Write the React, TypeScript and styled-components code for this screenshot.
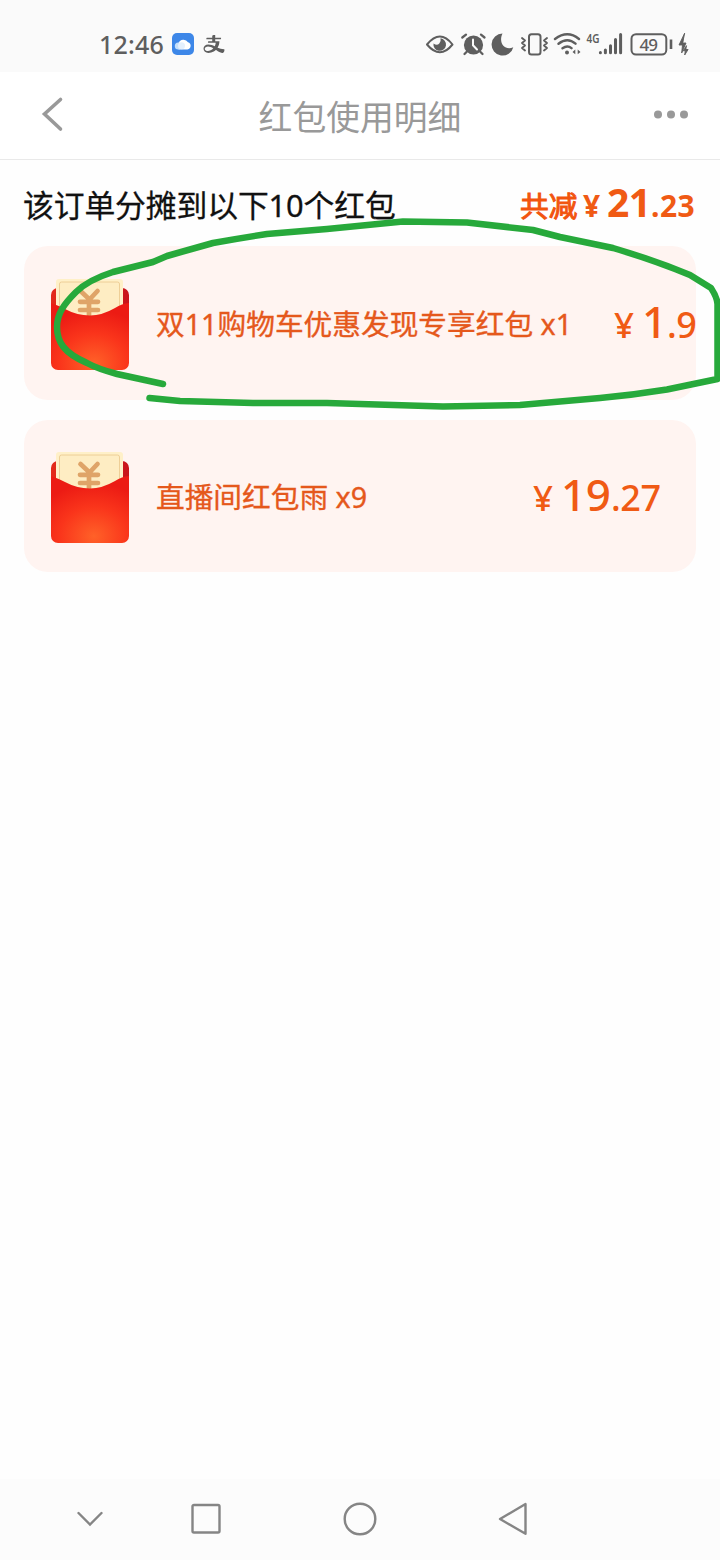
import React from "react";
import styled, { createGlobalStyle } from "styled-components";
import { AiOutlineAlipay } from "react-icons/ai";

const GlobalStyle = createGlobalStyle`
  * { box-sizing: border-box; }
  body {
    margin: 0;
    background: #fff;
    font-family: "Open Sans", "Noto Sans CJK SC", sans-serif;
  }
  svg { display: block; flex: none; }
`;

const Screen = styled.div`
  position: relative;
  display: flex;
  flex-direction: column;
  width: 720px;
  height: 1560px;
  background: #fefefe;
  overflow: hidden;
`;

const StatusBar = styled.header`
  display: flex;
  align-items: center;
  justify-content: space-between;
  height: 72px;
  padding: 16px 31px 0 99px;
  background: #fafafa;
  color: #5e5e5e;
`;

const StatusGroup = styled.div<{ $gap: number }>`
  display: flex;
  align-items: center;
  gap: ${(p) => p.$gap}px;
`;

const Clock = styled.span`
  width: 65px;
  font: 500 25px/30px "Noto Sans", sans-serif;
  letter-spacing: 0.2px;
  white-space: nowrap;
`;

const TitleBar = styled.div`
  display: grid;
  grid-template-columns: 72px 1fr 72px;
  align-items: center;
  height: 88px;
  padding: 0 16px;
  border-bottom: 1px solid #e9e9e9;
  background: #fff;
`;

const BarButton = styled.button<{ $end?: boolean }>`
  display: flex;
  justify-content: ${(p) => (p.$end ? "flex-end" : "flex-start")};
  padding: 0 ${(p) => (p.$end ? 15 : 0)}px ${(p) => (p.$end ? 2 : 4)}px ${(p) => (p.$end ? 0 : 24)}px;
  border: 0;
  background: none;
`;

const Title = styled.h1`
  margin: 0;
  text-align: center;
  font: 400 33.8px/48px "Noto Sans CJK SC", sans-serif;
  color: #999;
`;

const Content = styled.main`
  flex: 1;
  padding: 0 24px;
`;

const Summary = styled.div`
  display: flex;
  align-items: center;
  justify-content: space-between;
  height: 86px;
  padding-top: 4px;
`;

const SummaryText = styled.span`
  margin-left: -1px;
  font: 400 30.8px/44px "Noto Sans", "Noto Sans CJK SC", sans-serif;
  letter-spacing: -0.1px;
  color: #111;
  -webkit-text-stroke: 0.3px #111;
  white-space: nowrap;
`;

const Total = styled.span`
  display: flex;
  align-items: baseline;
  padding-bottom: 3px;
  color: #f2540d;
`;

const TotalLabel = styled.span`
  width: 63px;
  font: 400 28.7px/42px "Noto Sans CJK SC", sans-serif;
  -webkit-text-stroke: 1px #f2540d;
`;

const Amount = styled.span<{ $bold?: boolean }>`
  display: inline-flex;
  align-items: baseline;
  padding-bottom: ${(p) => (p.$bold ? 0 : 4)}px;
  color: #f05a14;
  font-family: "Noto Sans", sans-serif;
  font-weight: ${(p) => (p.$bold ? 700 : 500)};
  white-space: nowrap;
`;

const Part = styled.span<{ $size: number; $width: number; $spacing?: number }>`
  width: ${(p) => p.$width}px;
  font-size: ${(p) => p.$size}px;
  line-height: 44px;
  letter-spacing: ${(p) => p.$spacing ?? 0}px;
`;

const CouponList = styled.div`
  display: flex;
  flex-direction: column;
  gap: 20px;
`;

const Coupon = styled.section<{ $height: number; $inset: number }>`
  display: flex;
  align-items: center;
  height: ${(p) => p.$height}px;
  padding: 3px ${(p) => p.$inset}px 0 27px;
  border-radius: 24px;
  background: #fff4f1;
`;

const CouponName = styled.span`
  flex: 1;
  margin-left: 27px;
  padding-bottom: 1px;
  font: 400 28.7px/42px "Noto Sans", "Noto Sans CJK SC", sans-serif;
  color: #e5581c;
  -webkit-text-stroke: 0.35px #e5581c;
  white-space: nowrap;
`;

const NavBar = styled.nav`
  display: grid;
  grid-template-columns: 116px 116px 192px 114px;
  place-items: center;
  height: 81px;
  padding: 0 0 1px 32px;
  background: #fcfcfc;
`;

const Markup = styled.svg`
  position: absolute;
  top: 0;
  left: 0;
  pointer-events: none;
`;

const ink = "#5e5e5e";

const CloudIcon = () => (
  <svg width="22" height="22" viewBox="0 0 22 22">
    <rect width="22" height="22" rx="5" fill="#3d87e8" />
    <path d="M6.500 16.500L6.500 10A5.300 5.300 0 0 1 16 9.300a3.700 3.700 0 0 1-.5 7.200z" fill="#fff" />
    <circle cx="6.300" cy="13" r="3.500" fill="#c3dffb" />
    <circle cx="9.500" cy="12.800" r="3.500" fill="#e4f0fd" />
  </svg>
);

const StatusIcons = () => (
  <svg width="264" height="30" viewBox="425 29 264 30" fill="none" stroke={ink} strokeWidth="2" strokeLinecap="round">
    <path d="M427 44.500Q440 28.500 452.500 44.500Q440 60 427 44.500Z" strokeLinejoin="round" />
    <path d="M440.500 38.300a6.300 6.300 0 1 1-7 5.200q3.500 2.500 5.800 0q2-2.200 1.200-5.200z" fill={ink} stroke="none" />
    <circle cx="473.500" cy="45" r="9.600" fill={ink} stroke="none" />
    <path d="M462.300 37.500L466 34.600M481 34.600L484.500 37.500M466.500 52L464.500 54M480.500 52L482.500 54" strokeWidth="2.300" />
    <path d="M473 39.500V45.300L477 49.500" stroke="#fafafa" strokeWidth="2" />
    <path d="M502.500 33.600A11 11 0 1 0 513.300 47.200C505 51 498 43 502.500 33.600Z" fill={ink} stroke="none" />
    <rect x="529" y="34.300" width="11.500" height="20.200" rx="2.500" />
    <path d="M522 38l3 2.500l-3 2.500l3 2.500l-3 2.500l3 2.500M547 38l-3 2.500l3 2.500l-3 2.500l3 2.500l-3 2.500" strokeWidth="1.900" strokeLinejoin="round" />
    <path d="M555 39Q567.500 29.500 579 39M558.500 43.700Q567.500 36.800 575.500 43.700M562.500 48.200Q567.500 44.700 571.500 48.200" strokeWidth="2.400" />
    <circle cx="567" cy="52.500" r="2" fill={ink} stroke="none" />
    <path d="M572.500 52l2.800-2.500v4.800zM580.500 52l-2.800-2.500v4.800z" fill={ink} stroke="none" />
    <g fill={ink} stroke="none" fontFamily="Noto Sans, sans-serif">
      <text x="586.500" y="42.500" fontSize="12.500" fontWeight="600" textLength="13" lengthAdjust="spacingAndGlyphs">4G</text>
      <text x="639.500" y="50.800" fontSize="17" fontWeight="500" textLength="18.500">49</text>
    </g>
    <path d="M600.400 52.600v.2M605.400 50v2.800M610.500 45.800v7M615.500 39.500v13.300M620.600 34.500v18.300" strokeWidth="3" />
    <rect x="631.500" y="34.200" width="34.800" height="20.300" rx="4.500" />
    <path d="M671 39.500v9.500" strokeWidth="2.600" strokeLinecap="butt" />
    <path d="M684.500 33.500L679 45h3.500l-.8 8l4.300-10h-3zM686.300 46l-3 4.800h2l-.6 4.200l3.400-5.500h-2z" fill={ink} stroke={ink} strokeWidth=".9" strokeLinejoin="round" />
  </svg>
);

const Envelope = ({ id }: { id: string }) => (
  <svg width="78" height="92" viewBox="0 0 78 92">
    <defs>
      <radialGradient id={`${id}-red`} cx=".55" cy=".9" r=".8">
        <stop offset="0" stopColor="#ff6128" />
        <stop offset=".55" stopColor="#fa351b" />
        <stop offset="1" stopColor="#ec1b14" />
      </radialGradient>
      <linearGradient id={`${id}-back`} x1="0" x2="1">
        <stop offset="0" stopColor="#e32a1b" />
        <stop offset="1" stopColor="#c9151b" />
      </linearGradient>
    </defs>
    <rect y="9" width="78" height="50" rx="7" fill={`url(#${id}-back)`} />
    <rect x="5" y="0" width="67" height="40" rx="3" fill="#fff0c8" />
    <path d="M8.500 38V5a2 2 0 0 1 2-2h56a2 2 0 0 1 2 2v33" fill="#feedc3" stroke="#eccb92" strokeWidth=".9" />
    <g fill="none" stroke="#dfa468" strokeWidth="4.700" strokeLinecap="round">
      <path d="M29.500 12l9 8.500l8-8.500M29 22.800h18M29 31h18M38 20v16" />
    </g>
    <path d="M0 24Q6 26 14 30Q26 36.500 39 36.500Q51 36.500 64 29Q71 24.500 78 24V84a7 7 0 0 1-7 7H7a7 7 0 0 1-7-7z" fill={`url(#${id}-red)`} />
  </svg>
);

export default function App() {
  return (
    <>
      <GlobalStyle />
      <Screen>
        <StatusBar>
          <StatusGroup $gap={8}>
            <Clock>12:46</Clock>
            <CloudIcon />
            <AiOutlineAlipay size={24} />
          </StatusGroup>
          <StatusIcons />
        </StatusBar>

        <TitleBar>
          <BarButton aria-label="返回">
            <svg width="24" height="36" viewBox="0 0 24 36" fill="none" stroke="#999" strokeWidth="3.600" strokeLinecap="round">
              <path d="M20.500 3.500L4.500 18L20.500 33" />
            </svg>
          </BarButton>
          <Title>红包使用明细</Title>
          <BarButton $end aria-label="更多">
            <svg width="36" height="9" viewBox="0 0 36 9" fill="#999">
              <circle cx="5" cy="4.500" r="4" />
              <circle cx="18" cy="4.500" r="4" />
              <circle cx="31" cy="4.500" r="4" />
            </svg>
          </BarButton>
        </TitleBar>

        <Content>
          <Summary>
            <SummaryText>该订单分摊到以下10个红包</SummaryText>
            <Total>
              <TotalLabel>共减</TotalLabel>
              <Amount $bold>
                <Part $size={30} $width={24}>¥</Part>
                <Part $size={39} $width={44} $spacing={-0.500}>21</Part>
                <Part $size={30} $width={45} $spacing={0.500}>.23</Part>
              </Amount>
            </Total>
          </Summary>

          <CouponList>
            <Coupon $height={154} $inset={0}>
              <Envelope id="cart" />
              <CouponName>双11购物车优惠发现专享红包 x1</CouponName>
              <Amount>
                <Part $size={35} $width={28}>¥</Part>
                <Part $size={44} $width={25}>1</Part>
                <Part $size={36} $width={29} $spacing={-0.500}>.9</Part>
              </Amount>
            </Coupon>
            <Coupon $height={152} $inset={36}>
              <Envelope id="live" />
              <CouponName>直播间红包雨 x9</CouponName>
              <Amount>
                <Part $size={35} $width={28}>¥</Part>
                <Part $size={44} $width={50} $spacing={-0.500}>19</Part>
                <Part $size={36} $width={49} $spacing={-0.500}>.27</Part>
              </Amount>
            </Coupon>
          </CouponList>
        </Content>

        <NavBar>
          <svg width="28" height="16" viewBox="0 0 28 16" fill="none" stroke="#858585" strokeWidth="2.400" strokeLinecap="round">
            <path d="M2.500 2L14 13.500L25.500 2" />
          </svg>
          <svg width="32" height="32" viewBox="0 0 32 32" fill="none" stroke="#858585" strokeWidth="2.400">
            <rect x="2.500" y="2" width="27" height="27.500" rx="1.500" />
          </svg>
          <svg width="34" height="34" viewBox="0 0 34 34" fill="none" stroke="#858585" strokeWidth="2.400">
            <circle cx="17" cy="17" r="15.300" />
          </svg>
          <svg width="32" height="34" viewBox="0 0 32 34" fill="none" stroke="#858585" strokeWidth="2.400" strokeLinejoin="round">
            <path d="M3 17L28.500 2V31.800Z" />
          </svg>
        </NavBar>

        <Markup width="720" height="1560" viewBox="0 0 720 1560" fill="none" stroke="#27a93b" strokeWidth="6.500" strokeLinecap="round" strokeLinejoin="round">
          <path d="M163 384L117 374Q98 369 87 363C64 353 57 342 57 327C57 313 65 303 76 292Q88 280 113 272L153 262L167 256L213 243Q240 238 267 234L327 229L403 221.500L467 222.500L533 230L560 237L613 248Q654 260 690 275L711 288Q717 297 717.500 304V379L667 389.500Q633 395 600 398L520 405L443 406.500L377 404.500L327 403H253L180 401L149.500 398" />
        </Markup>
      </Screen>
    </>
  );
}
